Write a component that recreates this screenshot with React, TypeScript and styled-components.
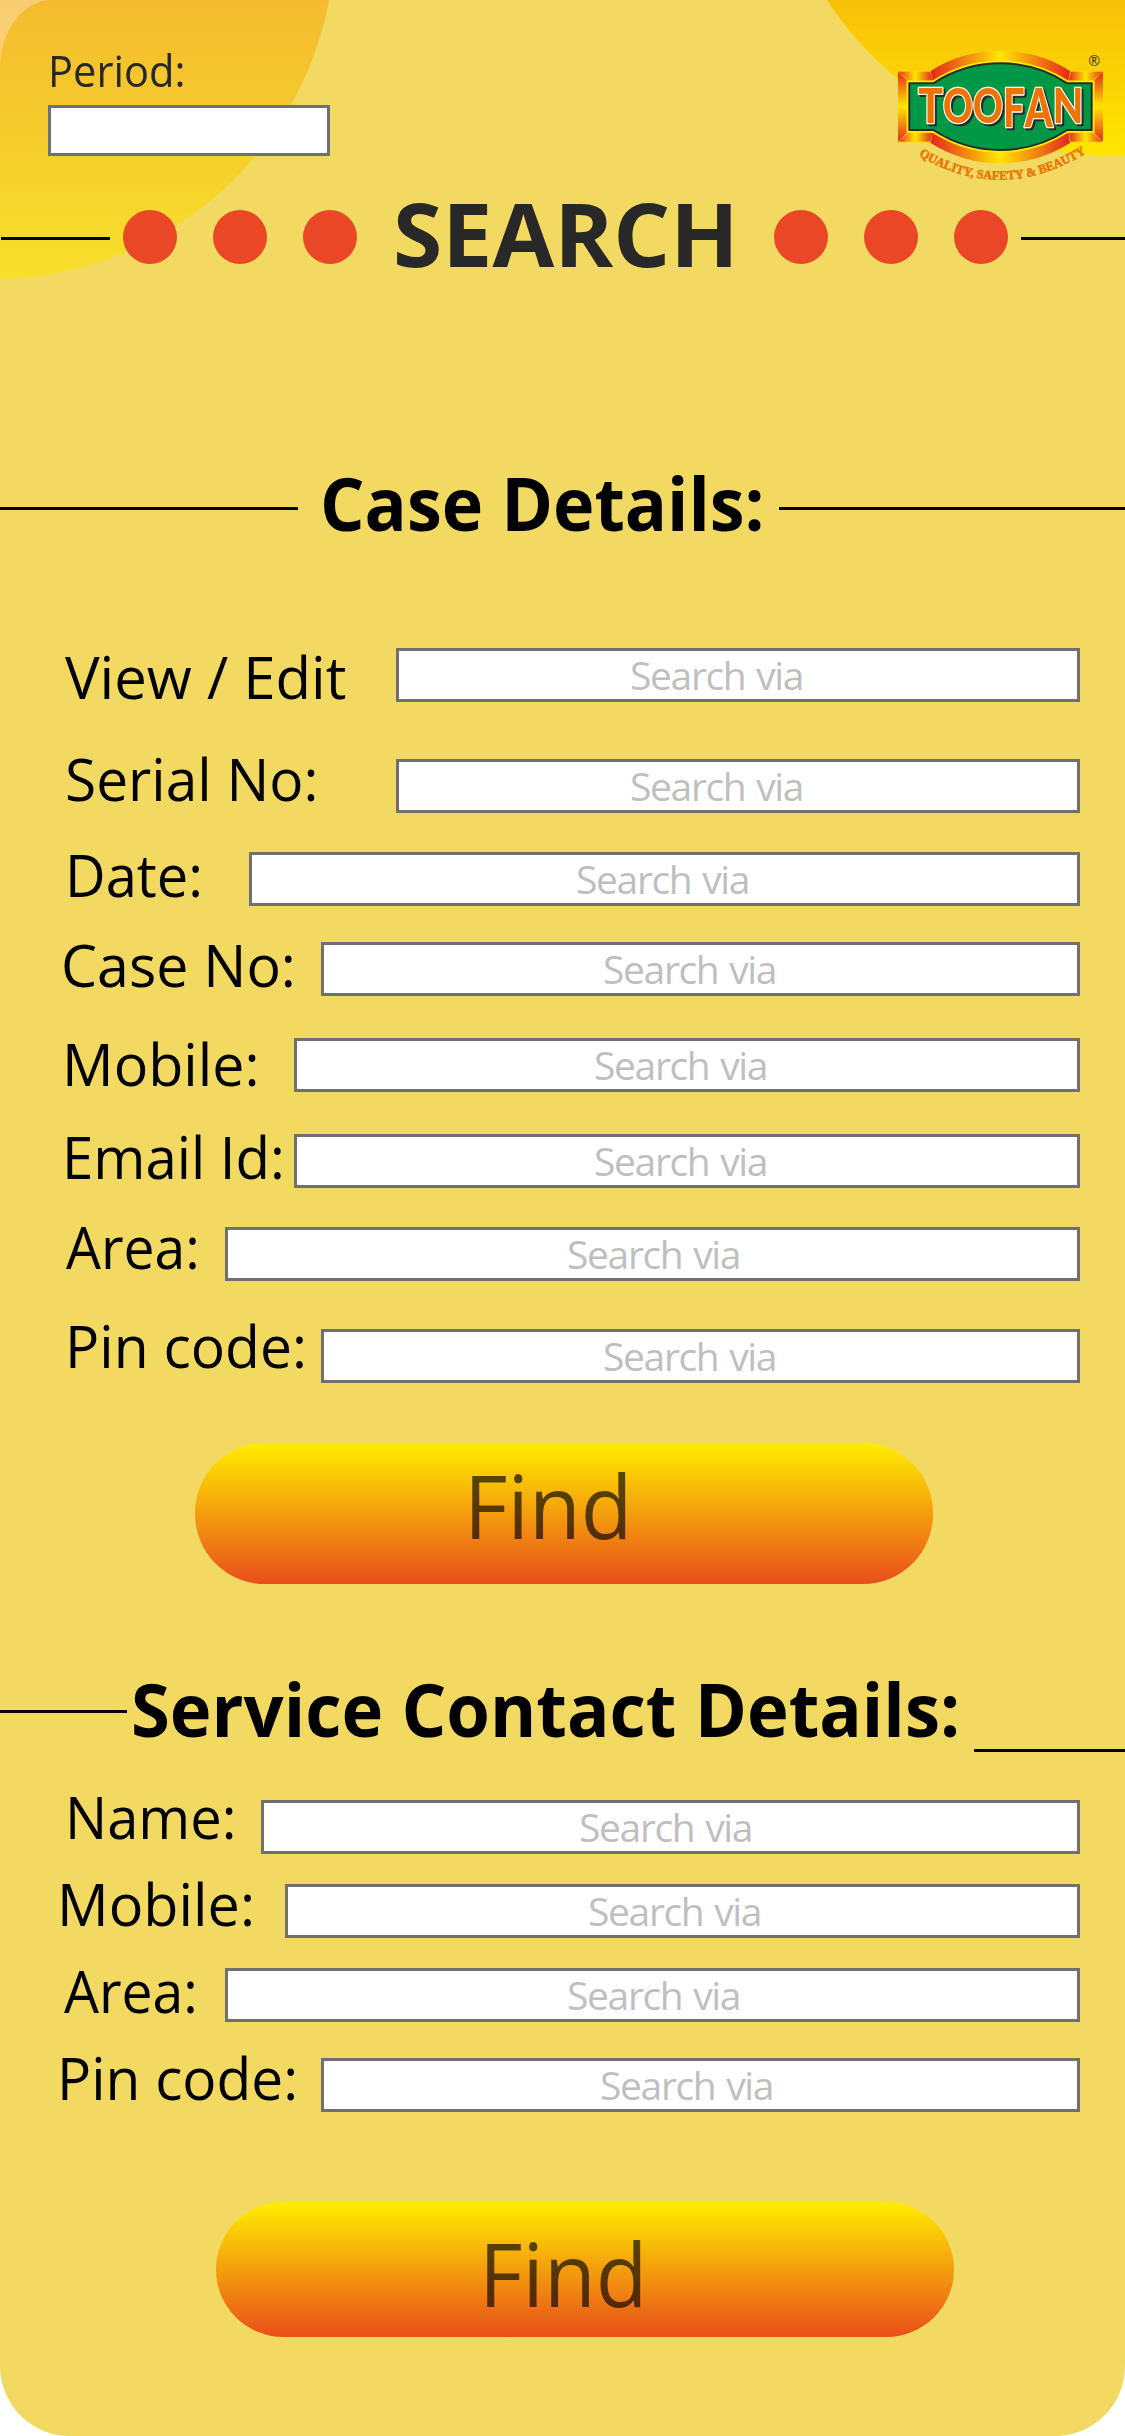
import React from 'react';
import styled, { createGlobalStyle } from 'styled-components';

const GlobalStyle = createGlobalStyle`
  *, *::before, *::after { box-sizing: border-box; }
  body {
    margin: 0;
    background: #ffffff;
    font-family: "Open Sans", "Noto Sans", sans-serif;
  }
`;

const Page = styled.main`
  position: relative;
  width: 1125px;
  height: 2436px;
  overflow: hidden;
  background: #ffffff;
`;

const Card = styled.div`
  position: relative;
  isolation: isolate;
  display: flex;
  flex-direction: column;
  height: 100%;
  background: #f2d962;
  border-radius: 52px 0 70px 70px / 68px 0 70px 70px;
`;

const Glow = styled.div`
  position: absolute;
  z-index: -1;
  width: 684px;
  height: 684px;
  border-radius: 50%;
`;

const LeftGlow = styled(Glow)`
  left: -349px;
  top: -405px;
  background: linear-gradient(to bottom, rgba(245, 164, 7, 0.57) 405px, rgba(252, 229, 0, 0.57) 684px);
`;

const RightGlow = styled(Glow)`
  left: 772px;
  top: -528px;
  background: linear-gradient(to bottom, #f8c008 528px, #fee600 684px);
`;

const Header = styled.header`
  display: flex;
  justify-content: space-between;
  align-items: flex-start;
  height: 210px;
  padding: 40px 5px 0 48px;
`;

const Stretched = styled.span<{ $scale: number }>`
  display: inline-block;
  white-space: nowrap;
  transform: scaleX(${(p) => p.$scale});
  transform-origin: left center;
`;

const Period = styled.label`
  display: flex;
  flex-direction: column;
  align-items: flex-start;
  color: #282828;
  font-size: 44px;
  line-height: 60px;
`;

const PeriodInput = styled.input`
  width: 282px;
  height: 51px;
  margin-top: 5px;
  border: 3px solid #707070;
  border-radius: 0;
  background: #ffffff;
  outline: none;
`;

const Brand = styled.svg`
  display: block;
  width: 240px;
  height: 150px;
`;

const BrandName = styled.text`
  fill: #ee7300;
  stroke: #ffffff;
  stroke-width: 8px;
  stroke-linejoin: round;
  paint-order: stroke;
  font-family: Lato, sans-serif;
  font-weight: 900;
  filter: drop-shadow(6px 6px 0 #2b2a29);
`;

const TitleBar = styled.div`
  display: flex;
  align-items: center;
  height: 54px;
  padding-left: 1px;
`;

const Title = styled.h1`
  flex: 0 0 417px;
  margin: -8px 0 0;
  padding-left: 36px;
  color: #282828;
  font-size: 88px;
  font-weight: 700;
  line-height: 54px;
`;

const TitleRule = styled.span<{ $width?: number }>`
  flex: ${(p) => (p.$width ? `0 0 ${p.$width}px` : '1')};
  height: 3px;
  margin-top: 3px;
  background: #000000;
`;

const Dots = styled.div`
  display: flex;
  gap: 36px;
  margin: 0 0 0 13px;
`;

const TrailingDots = styled(Dots)`
  margin: 0 13px 0 0;
`;

const Dot = styled.span`
  width: 54px;
  height: 54px;
  border-radius: 50%;
  background: #e94725;
`;

const SectionHead = styled.div<{ $gap: number }>`
  display: flex;
  align-items: flex-start;
  height: 90px;
  margin-top: ${(p) => p.$gap}px;
`;

const Rule = styled.span<{ $drop: number; $width?: number }>`
  flex: ${(p) => (p.$width ? `0 0 ${p.$width}px` : '1')};
  height: 3px;
  margin-top: ${(p) => p.$drop}px;
  background: #000000;
`;

const SectionTitle = styled.h2<{ $width: number; $indent: number }>`
  flex: 0 0 ${(p) => p.$width}px;
  min-width: 0;
  margin: 1px 0 0;
  padding-left: ${(p) => p.$indent}px;
  color: #000000;
  font-size: 74px;
  font-weight: 700;
  line-height: 90px;
`;

const Row = styled.label<{ $gap: number; $indent: number }>`
  display: flex;
  align-items: flex-start;
  height: 54px;
  margin-top: ${(p) => p.$gap}px;
  padding: 0 45px 0 ${(p) => p.$indent}px;
`;

const Caption = styled.span<{ $width: number; $shift: number }>`
  flex: 0 0 ${(p) => p.$width}px;
  min-width: 0;
  margin-top: ${(p) => p.$shift}px;
  color: #000000;
  font-size: 59px;
  line-height: 54px;
`;

const Field = styled.input<{ $inset: number }>`
  flex: 1;
  min-width: 0;
  height: 54px;
  padding: 0 0 2px ${(p) => p.$inset}px;
  border: 3px solid #707070;
  border-radius: 0;
  background: #ffffff;
  font-family: inherit;
  font-size: 39px;
  line-height: 46px;
  letter-spacing: -1.35px;
  word-spacing: 2px;
  outline: none;

  &::placeholder {
    color: #bfbfbf;
    opacity: 1;
  }
`;

const FindButton = styled.button<{ $gap: number; $left: number; $height: number; $pad: string }>`
  flex: none;
  width: 738px;
  height: ${(p) => p.$height}px;
  margin: ${(p) => p.$gap}px 0 0 ${(p) => p.$left}px;
  padding: ${(p) => p.$pad};
  border: 0;
  border-radius: 70px;
  background: linear-gradient(to bottom, #ffed00, #e94e1b);
  color: rgba(0, 0, 0, 0.65);
  font-family: inherit;
  font-size: 88px;
  line-height: 100px;
  text-align: left;
`;

type FieldSpec = {
  name: string;
  gap: number;
  left: number;
  fieldAt: number;
  shift: number;
  scale: number;
  inset: number;
};

const caseFields: FieldSpec[] = [
  { name: 'View / Edit', gap: 101, left: 65, fieldAt: 396, shift: 1, scale: 0.984, inset: 231 },
  { name: 'Serial No:', gap: 57, left: 64.5, fieldAt: 396, shift: -8, scale: 0.964, inset: 231 },
  { name: 'Date:', gap: 39, left: 65, fieldAt: 249, shift: -5, scale: 0.95, inset: 324 },
  { name: 'Case No:', gap: 36, left: 61, fieldAt: 321, shift: -5, scale: 0.971, inset: 279 },
  { name: 'Mobile:', gap: 42, left: 62, fieldAt: 294, shift: -2, scale: 0.973, inset: 297 },
  { name: 'Email Id:', gap: 42, left: 62, fieldAt: 294, shift: -5, scale: 0.955, inset: 297 },
  { name: 'Area:', gap: 39, left: 65.5, fieldAt: 225, shift: -8, scale: 0.937, inset: 339 },
  { name: 'Pin code:', gap: 48, left: 64.5, fieldAt: 321, shift: -11, scale: 0.966, inset: 279 },
];

const serviceFields: FieldSpec[] = [
  { name: 'Name:', gap: 47, left: 64.5, fieldAt: 261, shift: -11, scale: 0.95, inset: 315 },
  { name: 'Mobile:', gap: 30, left: 57, fieldAt: 285, shift: -8, scale: 0.975, inset: 300 },
  { name: 'Area:', gap: 30, left: 64, fieldAt: 225, shift: -5, scale: 0.937, inset: 339 },
  { name: 'Pin code:', gap: 36, left: 57, fieldAt: 321, shift: -8, scale: 0.963, inset: 276 },
];

function SearchRow({ spec }: { spec: FieldSpec }) {
  return (
    <Row $gap={spec.gap} $indent={spec.left}>
      <Caption $width={spec.fieldAt - spec.left} $shift={spec.shift}>
        <Stretched $scale={spec.scale}>{spec.name}</Stretched>
      </Caption>
      <Field placeholder="Search via" $inset={spec.inset} />
    </Row>
  );
}

const brandLetters = [
  { char: 'T', x: 115, y: 250, size: 142, width: 74 },
  { char: 'O', x: 189, y: 250, size: 142, width: 90 },
  { char: 'O', x: 279, y: 250, size: 142, width: 90 },
  { char: 'F', x: 369, y: 262, size: 158, width: 65 },
  { char: 'A', x: 434, y: 262, size: 158, width: 84 },
  { char: 'N', x: 518, y: 250, size: 142, width: 92 },
];

function BrandLogo() {
  const body = 'M88 130 H160 A367 367 0 0 1 562 130 H635 V270 H562 A367 367 0 0 1 160 270 H88 Z';
  return (
    <Brand viewBox="0 0 720 450">
      <defs>
        <linearGradient id="bar" x1="0" x2="1" y1="0" y2="0">
          <stop offset="0" stopColor="#e5261f" />
          <stop offset="0.5" stopColor="#ffe600" />
          <stop offset="1" stopColor="#e5261f" />
        </linearGradient>
        <linearGradient id="post" x1="0" x2="0" y1="0" y2="1">
          <stop offset="0" stopColor="#e5261f" />
          <stop offset="0.5" stopColor="#ffe600" />
          <stop offset="1" stopColor="#e5261f" />
        </linearGradient>
        <path id="tagline" d="M116 346 Q360 494 612 343" />
      </defs>
      <path fill="url(#post)" d="M54 93 L88 128 V272 L54 307 Z" />
      <path fill="url(#post)" d="M669 93 L635 128 V272 L669 307 Z" />
      <g fill="url(#bar)" stroke="#ffe000" strokeWidth="2">
        <path d="M54 94 H152 L158 124 H86 Z" />
        <path d="M54 306 H152 L158 276 H86 Z" />
        <path d="M669 94 H571 L565 124 H637 Z" />
        <path d="M669 306 H571 L565 276 H637 Z" />
      </g>
      <path fill="url(#bar)" d="M152 93 A389 389 0 0 1 570 93 L564 126 A367 367 0 0 0 158 126 Z" />
      <path fill="url(#bar)" d="M152 309 A389 389 0 0 0 570 309 L564 274 A367 367 0 0 1 158 274 Z" />
      <path d={body} fill="none" stroke="#ffed00" strokeWidth="17" />
      <path d={body} fill="#009846" stroke="#2b2a29" strokeWidth="6" />
      <BrandName>
        {brandLetters.map((l) => (
          <tspan
            key={l.x}
            x={l.x}
            y={l.y}
            fontSize={l.size}
            textLength={l.width}
            lengthAdjust="spacingAndGlyphs"
          >
            {l.char}
          </tspan>
        ))}
      </BrandName>
      <text
        fill="#ec7404"
        stroke="#ec7404"
        strokeWidth="1.5"
        fontFamily="'Liberation Serif', serif"
        fontWeight="700"
        fontSize="38"
      >
        <textPath href="#tagline" textLength="532" lengthAdjust="spacingAndGlyphs">
          QUALITY, SAFETY &amp; BEAUTY
        </textPath>
      </text>
      <text x="625" y="77" fill="#3a3410" fontFamily="'Open Sans', sans-serif" fontSize="43">
        ®
      </text>
    </Brand>
  );
}

export default function App() {
  return (
    <Page>
      <GlobalStyle />
      <Card>
        <LeftGlow />
        <RightGlow />
        <Header>
          <Period>
            <Stretched $scale={0.946}>Period:</Stretched>
            <PeriodInput />
          </Period>
          <BrandLogo />
        </Header>
        <TitleBar>
          <TitleRule $width={109} />
          <Dots>
            <Dot />
            <Dot />
            <Dot />
          </Dots>
          <Title>
            <Stretched $scale={1.017}>SEARCH</Stretched>
          </Title>
          <TrailingDots>
            <Dot />
            <Dot />
            <Dot />
          </TrailingDots>
          <TitleRule />
        </TitleBar>

        <SectionHead $gap={193}>
          <Rule $drop={50} $width={298} />
          <SectionTitle $width={481} $indent={22}>
            <Stretched $scale={0.946}>Case Details:</Stretched>
          </SectionTitle>
          <Rule $drop={50} />
        </SectionHead>
        {caseFields.map((f) => (
          <SearchRow key={f.name} spec={f} />
        ))}
        <FindButton $gap={60} $left={195} $height={141} $pad="0 0 18px 269px">
          <Stretched $scale={0.96}>Find</Stretched>
        </FindButton>

        <SectionHead $gap={79}>
          <Rule $drop={47} $width={127} />
          <SectionTitle $width={847} $indent={4}>
            <Stretched $scale={0.953}>Service Contact Details:</Stretched>
          </SectionTitle>
          <Rule $drop={86} />
        </SectionHead>
        {serviceFields.map((f) => (
          <SearchRow key={f.name} spec={f} />
        ))}
        <FindButton $gap={90} $left={216} $height={135} $pad="7px 0 0 263px">
          <Stretched $scale={0.96}>Find</Stretched>
        </FindButton>
      </Card>
    </Page>
  );
}
